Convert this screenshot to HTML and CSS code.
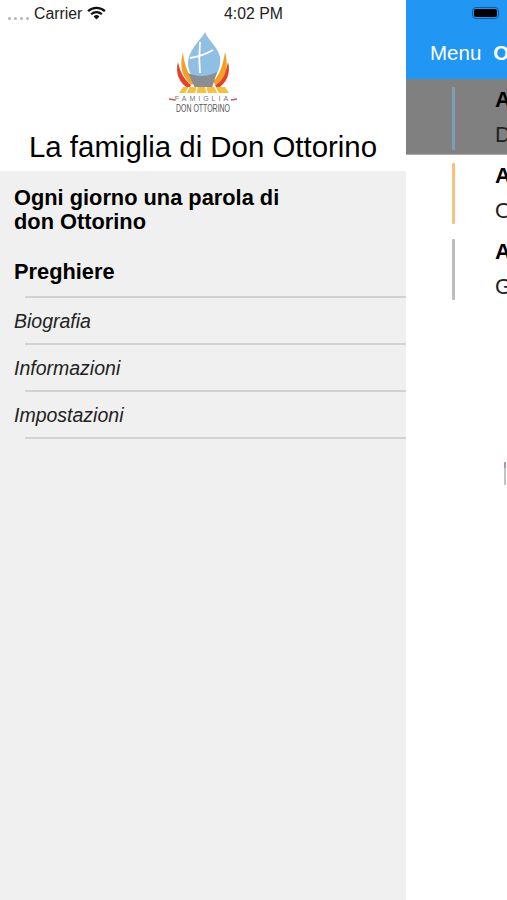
FILE: index.html
```html
<!DOCTYPE html>
<html lang="en">
<head>
    <meta charset="UTF-8">
    <meta name="viewport" content="width=device-width, initial-scale=1.0">
    <title>La famiglia di Don Ottorino</title>
    <link rel="stylesheet" href="styles.css">
</head>
<body>
    <div class="status-bar">
        <div class="status-left">
            <span class="signal"><i></i><i></i><i></i><i></i></span>
            <span>Carrier</span>
            <svg class="wifi" viewBox="0 0 20 15" width="19" height="14">
                <path d="M1 5.5a13 13 0 0 1 18 0" fill="none" stroke="#111" stroke-width="2.4"/>
                <path d="M4.3 8.8a8.4 8.4 0 0 1 11.4 0" fill="none" stroke="#111" stroke-width="2.4"/>
                <path d="M10 14.5 6.9 11.3a4.4 4.4 0 0 1 6.2 0z" fill="#111"/>
            </svg>
        </div>
        <div class="status-time">4:02 PM</div>
        <div class="battery"><span class="battery-fill"></span></div>
    </div>

    <div class="app">
        <aside class="menu">
            <div class="menu-head">
                <svg class="logo" viewBox="0 0 76 84" width="76" height="84">
                    <path d="M13 32c-3 11 1 21 11 27l2-4c-7-6-11-13-13-23z" fill="#e4432b"/>
                    <path d="M63 32c3 11-1 21-11 27l-2-4c7-6 11-13 13-23z" fill="#e4432b"/>
                    <path d="M18 22c-4 14-1 26 9 33l3-3c-7-8-11-17-12-30z" fill="#f2a127"/>
                    <path d="M60 22c4 14 1 26-9 33l-3-3c7-8 10-17 12-30z" fill="#f2a127"/>
                    <path d="M40 2c-2 6-16 16-17 31 0 5 2 10 4 14l23 0c4-6 6-13 5-20C53 17 43 10 40 2z" fill="#8fbfe2"/>
                    <path d="M35 12c-1 11-1 21 0 31M25 28c8-1 16-4 23-8" fill="none" stroke="#fff" stroke-width="1.8"/>
                    <path d="M23 43c9 4 19 4 29-1l-5 16c-6 1-12 1-17 0z" fill="#8a8d92"/>
                    <path d="M18 57h42l4 6H14z" fill="#f6c140"/>
                    <path d="M24 57l-3 6M32 57l-1 6M41 57l1 6M50 57l3 6" stroke="#fff" stroke-width="1.4"/>
                    <text class="logo-top" x="38" y="71" text-anchor="middle">FAMIGLIA</text>
                    <text class="logo-name" x="38" y="82" text-anchor="middle" textLength="54" lengthAdjust="spacingAndGlyphs">DON OTTORINO</text>
                    <path d="M4 69l6 1M66 70l6-1" stroke="#d9534f" stroke-width="1.6"/>
                </svg>
                <h1 class="menu-title">La famiglia di Don Ottorino</h1>
            </div>
            <nav class="menu-list">
                <a class="menu-item menu-item-main menu-item-first">Ogni giorno una parola di<br>don Ottorino</a>
                <a class="menu-item menu-item-main menu-item-rule">Preghiere</a>
                <a class="menu-item menu-item-sub menu-item-rule">Biografia</a>
                <a class="menu-item menu-item-sub menu-item-rule">Informazioni</a>
                <a class="menu-item menu-item-sub menu-item-rule">Impostazioni</a>
            </nav>
        </aside>

        <main class="content">
            <div class="topbar">
                <span>Menu</span>
                <b>Ogni giorno</b>
            </div>
            <div class="entry entry-selected">
                <span class="entry-bar bar-blue"></span>
                <div class="entry-text"><strong>Anno</strong><span>Dicembre</span></div>
            </div>
            <div class="entry">
                <span class="entry-bar bar-orange"></span>
                <div class="entry-text"><strong>Anno</strong><span>Ottobre</span></div>
            </div>
            <div class="entry">
                <span class="entry-bar bar-grey"></span>
                <div class="entry-text"><strong>Anno</strong><span>Giugno</span></div>
            </div>
            <div class="sliver"></div>
        </main>
    </div>
</body>
</html>
```

FILE: styles.css
```css
body {
    margin: 0;
    font-family: 'Liberation Sans', Arial, sans-serif;
    background: #fff;
    color: #000;
}
.status-bar {
    position: absolute;
    top: 0;
    left: 0;
    width: 507px;
    height: 26px;
    font-size: 15.8px;
    color: #222;
}
.status-left {
    position: absolute;
    left: 8px;
    top: 5px;
    display: flex;
    align-items: center;
    gap: 5px;
}
.signal {
    display: flex;
    gap: 3px;
    margin-top: 8px;
}
.signal i {
    width: 3px;
    height: 3px;
    border-radius: 50%;
    background: #b5b5b5;
}
.wifi {
    margin-top: -2px;
}
.status-time {
    position: absolute;
    top: 5px;
    left: 0;
    width: 100%;
    text-align: center;
}
.battery {
    position: absolute;
    left: 472px;
    top: 7px;
    width: 27px;
    height: 12px;
    box-sizing: border-box;
    border: 1px solid #125a9c;
    border-radius: 4px;
    padding: 1px;
}
.battery-fill {
    display: block;
    height: 100%;
    background: #000;
    border-radius: 2px;
}
.app {
    display: flex;
    height: 900px;
    overflow: hidden;
}
.menu {
    width: 406px;
    flex: none;
    background: #f0f0f0;
}
.menu-head {
    background: #fff;
    height: 171px;
    box-sizing: border-box;
    padding-top: 30px;
    text-align: center;
}
.logo {
    display: block;
    margin: 0 auto;
}
.logo-top {
    font-size: 7px;
    letter-spacing: 3px;
    fill: #777;
}
.logo-name {
    font-size: 10px;
    fill: #555;
}
.menu-title {
    margin: 16px 0 0;
    font-size: 29.4px;
    line-height: 34px;
    font-weight: normal;
}
.menu-list {
    display: flex;
    flex-direction: column;
}
.menu-item {
    display: block;
    padding-left: 14px;
    color: #000;
}
.menu-item-main {
    font-size: 21.8px;
    line-height: 24px;
    font-weight: bold;
}
.menu-item-first {
    padding-top: 15px;
    padding-bottom: 12px;
}
.menu-item-main.menu-item-rule {
    padding-top: 14px;
    padding-bottom: 14px;
}
.menu-item-sub {
    font-size: 19.5px;
    line-height: 24px;
    font-style: italic;
    padding-top: 11px;
    padding-bottom: 12px;
    color: #222;
}
.menu-item-rule {
    position: relative;
}
.menu-item-rule::after {
    content: "";
    position: absolute;
    left: 25px;
    right: 0;
    bottom: 0;
    height: 2px;
    background: #d2d2d2;
}
.content {
    flex: 1;
    min-width: 0;
    overflow: hidden;
}
.topbar {
    height: 79px;
    box-sizing: border-box;
    background: #2196f3;
    color: #fff;
    padding: 41px 0 0 24px;
    font-size: 20.5px;
    line-height: 24px;
    white-space: nowrap;
    display: flex;
    gap: 12px;
}
.entry {
    display: flex;
    height: 61px;
    margin-bottom: 15px;
    padding-left: 46px;
    white-space: nowrap;
}
.entry-selected {
    background: #808080;
    height: 76px;
    box-sizing: border-box;
    padding-top: 8px;
    padding-bottom: 4px;
    margin-bottom: 8px;
    border-bottom: 1px solid #aaa;
}
.entry-bar {
    flex: none;
    width: 3px;
    height: 100%;
    border-radius: 1px;
}
.bar-blue { background: #7c9fb5; }
.bar-orange { background: #f8c27c; }
.bar-grey { background: #bdbdbd; }
.entry-text {
    display: flex;
    flex-direction: column;
    gap: 9px;
    margin-left: 40px;
    font-size: 22px;
    line-height: 26px;
    color: #222;
}
.entry-text strong {
    color: #000;
}
.sliver {
    width: 2px;
    height: 23px;
    margin: 162px 0 0 98px;
    background: linear-gradient(#c98aa5 0 6px, #c4c4c4 6px);
}
```
